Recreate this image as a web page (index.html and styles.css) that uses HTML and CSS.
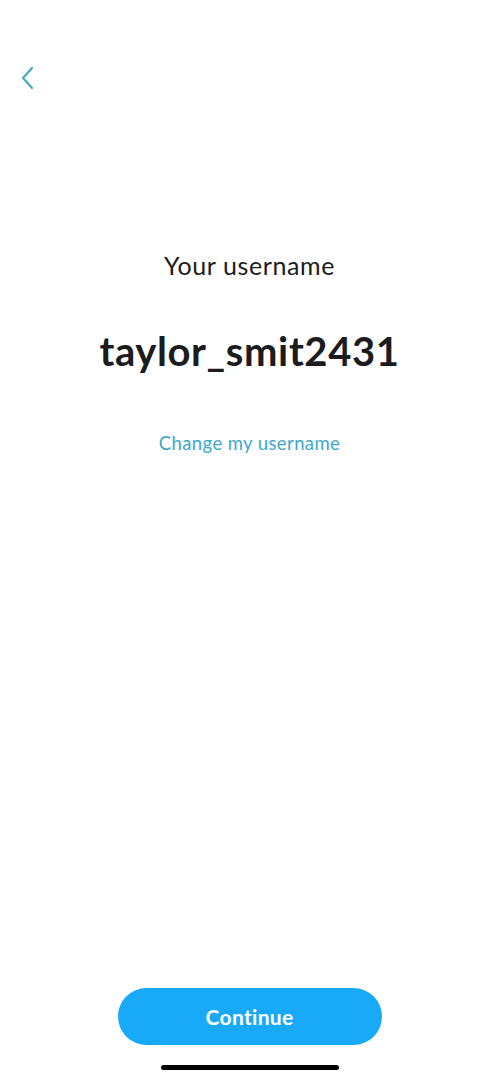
FILE: index.html
```html
<!DOCTYPE html>
<html lang="en">
<head>
  <meta charset="UTF-8" />
  <title>Your username</title>
  <link rel="stylesheet" href="styles.css">
</head>
<body>
  <div class="screen">
    <header class="topbar">
      <button class="back" aria-label="Back">
        <svg width="14" height="24" viewBox="0 0 14 24"><path d="M12 2 L3 12 L12 22" fill="none" stroke="#4aa6c6" stroke-width="2.2" stroke-linecap="round" stroke-linejoin="round"/></svg>
      </button>
    </header>

    <main class="content">
      <h2 class="label">Your username</h2>
      <div class="username">taylor_smit2431</div>
      <a class="change" href="#">Change my username</a>
    </main>

    <footer class="bottom">
      <button class="continue">Continue</button>
      <div class="home"></div>
    </footer>
  </div>
</body>
</html>
```

FILE: styles.css
```css
body { margin: 0; background: #fff; font-family: Lato, "Open Sans", sans-serif; }
.screen { height: 1080px; display: flex; flex-direction: column; }
.topbar { height: 156px; padding: 66px 0 0 17px; box-sizing: border-box; }
.back { background: none; border: 0; padding: 0; width: 20px; height: 26px; cursor: pointer; }
.content { flex: 1; display: flex; flex-direction: column; align-items: center; }
.label { margin: 93px 0 0; font-size: 25px; font-weight: 400; color: #1c1c1e; letter-spacing: 0.6px; line-height: 32px; }
.username { margin-top: 46px; font-size: 40px; font-weight: 700; color: #1c1c1e; letter-spacing: 0.6px; line-height: 48px; }
.change { margin-top: 56px; font-size: 18.5px; color: #40a8cc; text-decoration: none; letter-spacing: 0.4px; line-height: 24px; }
.bottom { display: flex; flex-direction: column; align-items: center; padding-bottom: 10px; }
.continue { width: 264px; height: 57px; border: 0; border-radius: 29px; background: #18aaf8; color: #fff; font-family: inherit; font-size: 21px; font-weight: 700; letter-spacing: 0.3px; }
.home { width: 178px; height: 5px; border-radius: 3px; background: #000; margin-top: 20px; }
```
